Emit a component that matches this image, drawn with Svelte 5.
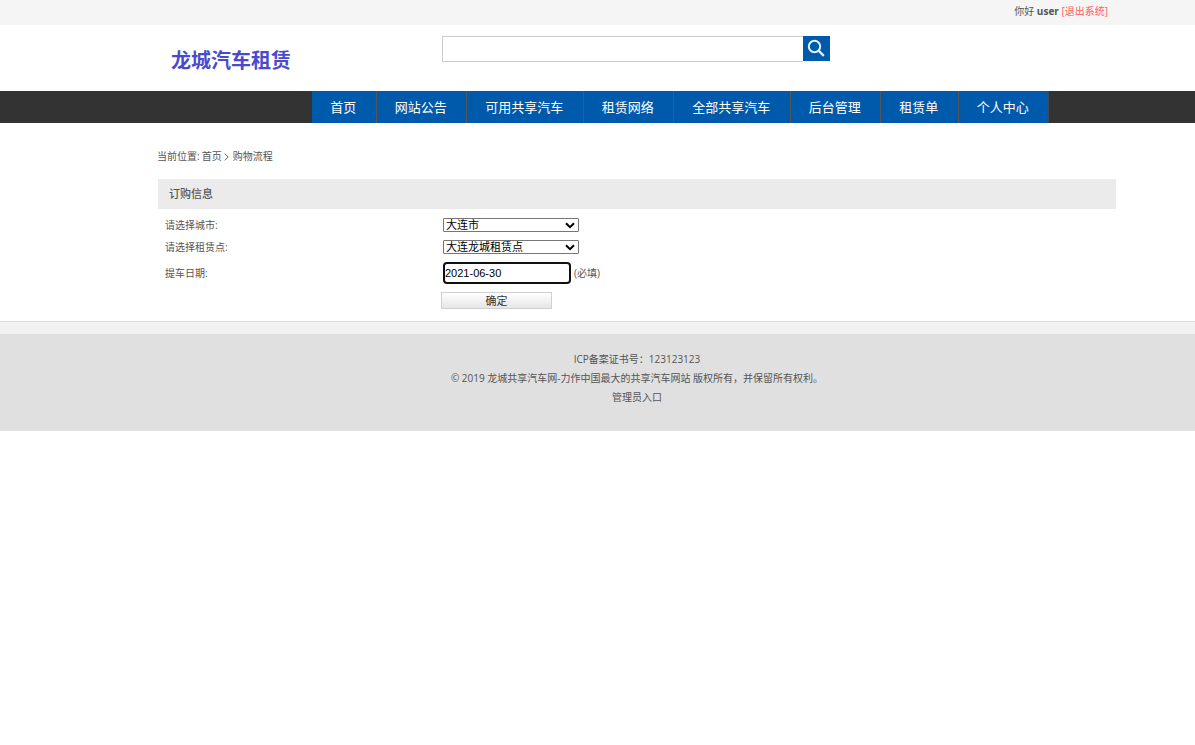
<script>
  const links = ['首页', '网站公告', '可用共享汽车', '租赁网络', '全部共享汽车', '后台管理', '租赁单', '个人中心'];
  let keyword = $state('');
  let city = $state('大连市');
  let shop = $state('大连龙城租赁点');
  let date = $state('2021-06-30');
</script>

{#snippet arrow()}
  <svg viewBox="0 0 10 7" width="10" height="7" fill="none" stroke="#000" stroke-width="2" aria-hidden="true"><path d="M1 1.2L5 5.2L9 1.2" /></svg>
{/snippet}

<div class="topbar">
  <div class="wrap">你好 <b>user</b> <a href="#logout">[退出系统]</a></div>
</div>

<header class="wrap header">
  <a class="logo" href="#home">龙城汽车租赁</a>
  <form class="search" onsubmit={(e) => e.preventDefault()}>
    <input type="text" aria-label="搜索" bind:value={keyword} />
    <button type="submit" aria-label="搜索">
      <svg viewBox="0 0 27 25" width="27" height="25" fill="none" stroke="#e8f2fb">
        <circle cx="11.5" cy="10.5" r="5.7" stroke-width="2" />
        <path d="M15.5 14.5L20.8 19.8" stroke-width="2.4" />
      </svg>
    </button>
  </form>
</header>

<nav class="nav">
  <ul>
    {#each links as link}
      <li><a href="#nav">{link}</a></li>
    {/each}
  </ul>
</nav>

<main class="wrap">
  <div class="crumbs">
    <span>当前位置:</span>
    <a href="#home">首页</a>
    <svg viewBox="0 0 5 8" width="5" height="8" fill="none" stroke="#666"><path d="M.7 .7L4.2 4L.7 7.3" /></svg>
    <span>购物流程</span>
  </div>
  <h2>订购信息</h2>
  <form class="order" onsubmit={(e) => e.preventDefault()}>
    <label for="city">请选择城市:</label>
    <div class="pick"><select id="city" bind:value={city}><option>大连市</option></select>{@render arrow()}</div>
    <label for="shop">请选择租赁点:</label>
    <div class="pick"><select id="shop" bind:value={shop}><option>大连龙城租赁点</option></select>{@render arrow()}</div>
    <label for="date">提车日期:</label>
    <div class="field"><input id="date" type="text" bind:value={date} /><span>(必填)</span></div>
    <button type="submit">确定</button>
  </form>
</main>

<div class="strip"></div>
<footer>
  <div class="wrap">
    <p>ICP备案证书号：123123123</p>
    <p>© 2019 龙城共享汽车网-力作中国最大的共享汽车网站 版权所有，并保留所有权利。</p>
    <p><a href="#admin">管理员入口</a></p>
  </div>
</footer>

<style>
  :global(body) {
    margin: 0;
    background: #fff;
    color: #555;
    font: 10px/19px "Open Sans", "Noto Sans CJK SC", sans-serif;
  }
  a { color: inherit; text-decoration: none; }
  input, select, button { box-sizing: border-box; margin: 0; font-family: inherit; }
  .wrap { padding: 0 78px 0 157px; }
  .topbar { background: #f5f5f5; }
  .topbar .wrap { padding-right: 87px; padding-bottom: 2px; line-height: 23px; text-align: right; }
  .topbar a { color: #ff5c5c; }

  .header { display: flex; align-items: flex-start; height: 66px; }
  .logo {
    box-sizing: border-box;
    width: 285px;
    padding: 20px 0 0 14px;
    color: #4a4ad0;
    font: 700 20px/30px "Noto Sans CJK SC", sans-serif;
  }
  .search { display: flex; align-items: flex-start; margin-top: 11px; }
  .search input {
    width: 361px;
    height: 26px;
    padding: 0 6px;
    border: 1px solid #ccc;
    border-right: 0;
    outline: 0;
  }
  .search button { width: 27px; height: 25px; padding: 0; border: 0; background: #005aab; }
  .search svg { display: block; }

  .nav { background: #333; padding-left: 312px; }
  .nav ul { display: flex; width: 737px; margin: 0; padding: 0; list-style: none; }
  .nav li { flex: 1 0 auto; border-right: 1px solid #555; background: #005aab; }
  .nav li:last-child { border-right-color: #3d4a56; }
  .nav a {
    display: block;
    padding: 0 18px 0 17px;
    color: #fff;
    font-size: 13px;
    line-height: 32px;
    text-align: center;
  }

  .crumbs { display: flex; align-items: center; gap: 2px; padding: 24px 0 13px; }
  .crumbs svg { margin-right: 2px; }
  h2 {
    margin: 0 1px;
    padding-left: 11px;
    background: #ebebeb;
    font-size: 11px;
    font-weight: 500;
    line-height: 30px;
  }
  .order {
    display: grid;
    grid-template-columns: 278px 1fr;
    grid-template-rows: 22px 22px 30px auto;
    align-items: center;
    padding: 5px 0 12px 8px;
  }
  .pick { display: grid; grid-template-columns: 136px; align-items: center; }
  .pick select, .pick svg { grid-area: 1 / 1; }
  .pick svg { justify-self: end; margin-right: 4px; pointer-events: none; }
  .order select {
    appearance: none;
    height: 14px;
    padding: 0 18px 0 2px;
    border: 1px solid #767676;
    border-radius: 1px;
    background: #fff;
    color: #000;
    font-size: 11px;
    line-height: 12px;
  }
  .field { display: flex; align-items: center; }
  .order input {
    width: 128px;
    height: 22px;
    padding: 0;
    border: 2px solid #101010;
    border-radius: 4px;
    outline: 0;
    color: #000;
    font: 11px "Liberation Sans", sans-serif;
  }
  .order span { margin-left: 3px; }
  .order button {
    grid-column: 2;
    width: 111px;
    height: 17px;
    margin: 4px 0 0 -2px;
    padding: 0;
    border: 1px solid #d0d0d0;
    background: linear-gradient(#fff, #e6e6e6);
    color: #333;
    font-size: 11px;
    line-height: 15px;
  }

  .strip { height: 12px; border-top: 1px solid #ddd; background: #f2f2f2; }
  footer { padding: 16px 0 24px; background: #e0e0e0; text-align: center; }
  footer p { margin: 0; }
</style>
